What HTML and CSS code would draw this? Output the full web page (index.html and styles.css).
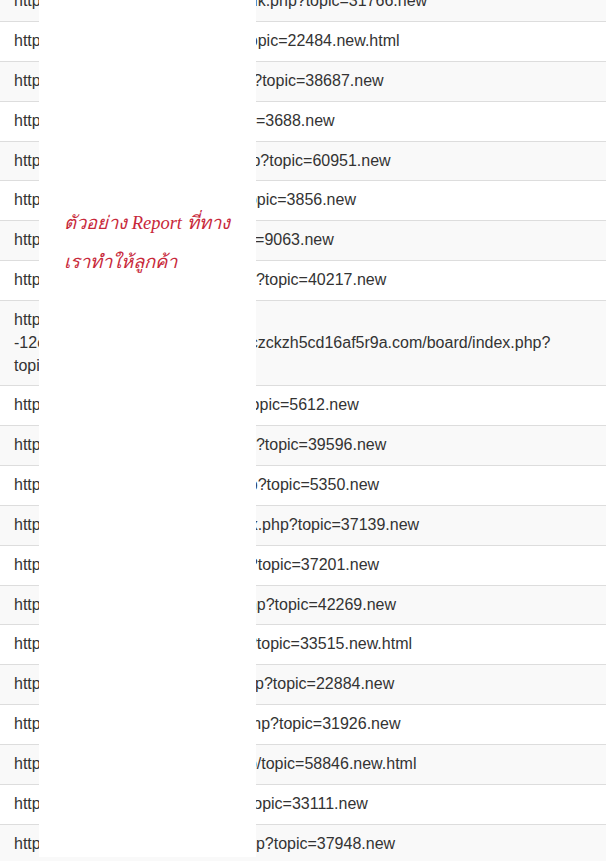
FILE: index.html
```html
<!DOCTYPE html>
<html lang="th">
<head>
    <meta charset="UTF-8">
    <meta name="viewport" content="width=device-width, initial-scale=1.0">
    <title>Report</title>
    <link rel="stylesheet" href="styles.css">
</head>
<body>
    <div class="report">
        <table class="link-table">
            <tbody>
                <tr><td>http://www.amuletsz.com/forum/talk.php?topic=31766.new</td></tr>
                <tr><td>http://www.zone.com/index.php?topic=22484.new.html</td></tr>
                <tr><td>http://www.thaigun.com/index.php?topic=38687.new</td></tr>
                <tr><td>http://siamza.com/index.php?topic=3688.new</td></tr>
                <tr><td>http://www.siamdvd.com/index.php?topic=60951.new</td></tr>
                <tr><td>http://www.siam.com/index.php?topic=3856.new</td></tr>
                <tr><td>http://thaiguru.net/index.php?topic=9063.new</td></tr>
                <tr><td>http://www.thaiweb.com/index.php?topic=40217.new</td></tr>
                <tr><td>http://www.xn-<br>-12cxj2gm7bb5ao6bj1gya4cq2baczckzh5cd16af5r9a.com/board/index.php?<br>topic=5032.new</td></tr>
                <tr><td>http://www.bando.net/index.php?topic=5612.new</td></tr>
                <tr><td>http://www.thaibike.com/index.php?topic=39596.new</td></tr>
                <tr><td>http://www.thaimod.com/index.php?topic=5350.new</td></tr>
                <tr><td>http://www.samui.com/board/index.php?topic=37139.new</td></tr>
                <tr><td>http://www.phuket.com/index.php?topic=37201.new</td></tr>
                <tr><td>http://www.chiangmai.net/index.php?topic=42269.new</td></tr>
                <tr><td>http://www.kaidee.com/index.php?topic=33515.new.html</td></tr>
                <tr><td>http://www.siamhiso.com/index.php?topic=22884.new</td></tr>
                <tr><td>http://www.siamsport.com/index.php?topic=31926.new</td></tr>
                <tr><td>http://www.thaitech.com/index.php/topic=58846.new.html</td></tr>
                <tr><td>http://www.lanna.com/index.php?topic=33111.new</td></tr>
                <tr><td>http://www.siamfans.com/index.php?topic=37948.new</td></tr>
            </tbody>
        </table>

        <div class="side-note">
            <div class="side-note-text">ตัวอย่าง Report ที่ทาง<br>เราทำให้ลูกค้า</div>
        </div>
    </div>
</body>
</html>
```

FILE: styles.css
```css
html, body {
    margin: 0;
    padding: 0;
    overflow: hidden;
}
body {
    font-family: 'Liberation Sans', Arial, sans-serif;
    font-size: 16px;
    line-height: 1.42857;
    color: #333;
    background-color: #fff;
}
.report {
    position: relative;
    margin-top: -18.86px;
}
.link-table {
    width: 100%;
    border-collapse: collapse;
    border-spacing: 0;
}
.link-table td {
    padding: 8px 8px 8px 14px;
    border-top: 1px solid #ddd;
    vertical-align: top;
    text-align: left;
}
.link-table tr:nth-child(odd) td {
    background-color: #f9f9f9;
}

/* white note panel lying over the table */
.side-note {
    position: absolute;
    top: 0;
    left: 39px;
    width: 217px;
    height: 875.86px;
    background-color: #fff;
}
.side-note-text {
    padding: 223px 0 0 25px;
    font-family: 'Liberation Serif', 'Times New Roman', serif;
    font-style: italic;
    font-size: 18.5px;
    line-height: 39px;
    color: #c8283a;
}
```
